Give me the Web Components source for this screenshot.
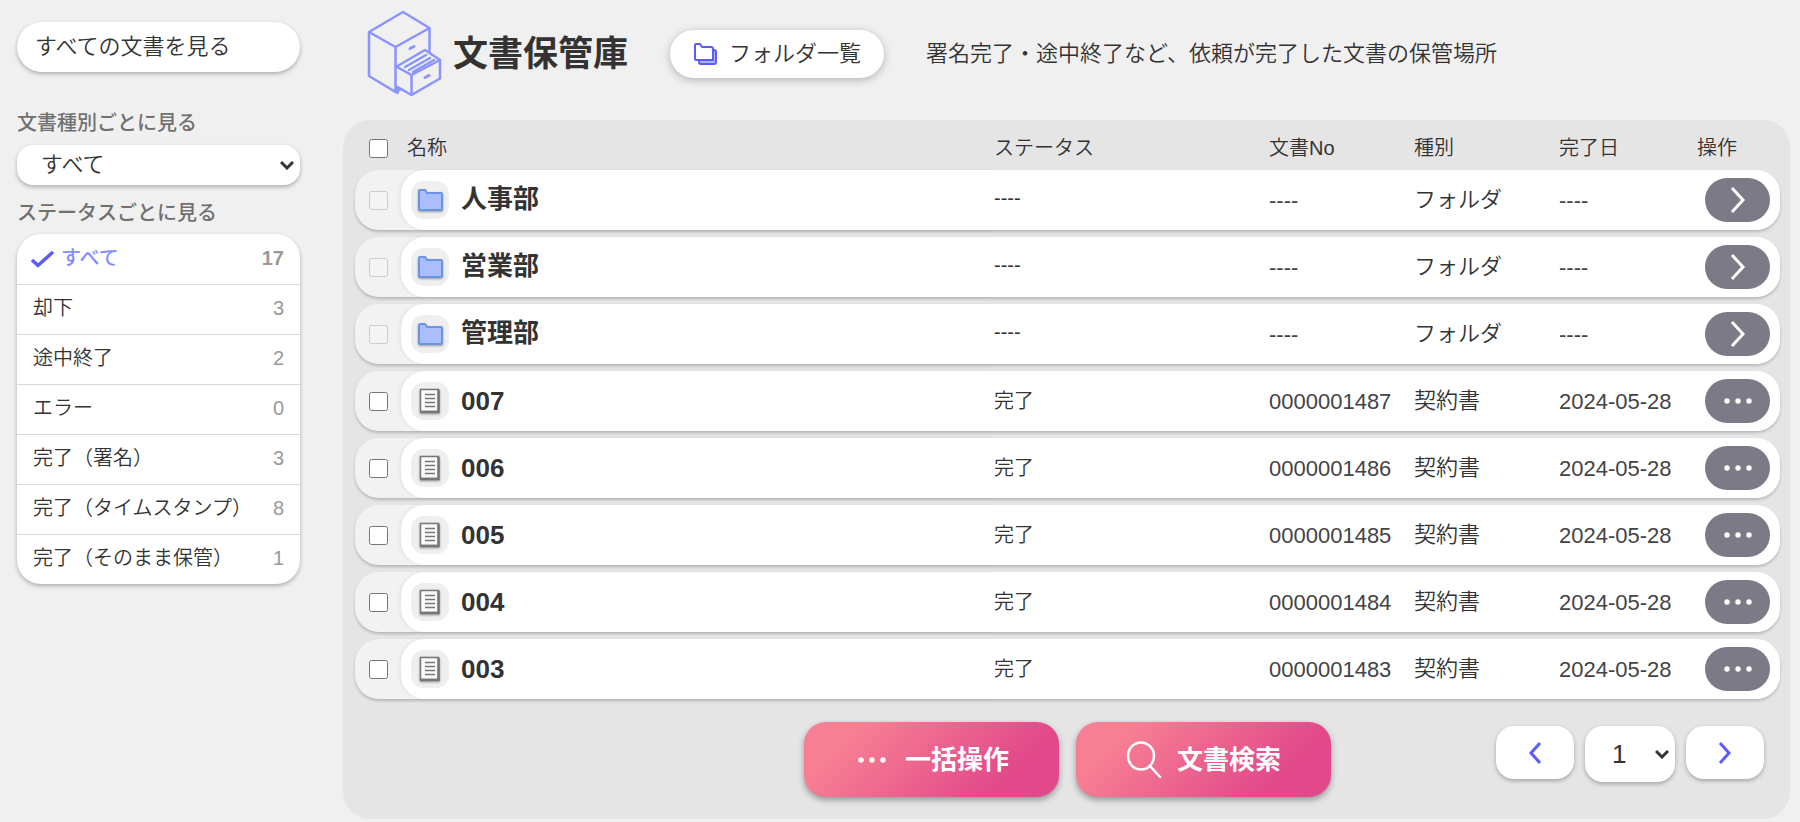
<!DOCTYPE html>
<html lang="ja">
<head>
<meta charset="utf-8">
<meta name="viewport" content="width=device-width, initial-scale=1">
<title>文書保管庫</title>
<style>
    body {
        margin: 0;
        background-color: #f0f0f0;
        color: #333;
        font-family: "Liberation Sans", "Noto Sans CJK JP", sans-serif;
        font-size: 20px;
        font-weight: 350;
    }
</style>
</head>
<body>
<archive-app>
    <side-menu slot="side"></side-menu>
    <archive-header slot="main">文書保管庫</archive-header>
    <archive-panel slot="main">
        <archive-table></archive-table>
        <action-button slot="actions" icon="dots">一括操作</action-button>
        <action-button slot="actions" icon="search">文書検索</action-button>
        <page-nav slot="pager"></page-nav>
    </archive-panel>
</archive-app>

<script>
const BASE = `
    :host, * {
        box-sizing: border-box;
    }

    button, select {
        margin: 0;
        padding: 0;
        border: 0;
        color: inherit;
        font: inherit;
        cursor: pointer;
    }

    svg {
        display: block;
        flex: none;
    }

    .select {
        display: grid;
        align-items: center;
    }

    .select > * {
        grid-area: 1 / 1;
    }

    .select select {
        appearance: none;
        width: 100%;
        background-color: white;
        box-shadow: 0 2px 4px rgba(0, 0, 0, .28);
    }

    .select svg {
        justify-self: end;
        margin-right: 6px;
        pointer-events: none;
    }
`;

const CHEVRON_DOWN = `
    <svg width="14" height="10" viewBox="0 0 14 10" fill="none" stroke="#333" stroke-width="3">
        <path d="M1 2l6 6 6-6"></path>
    </svg>
`;

class ArchiveApp extends HTMLElement {
    constructor() {
        super();
        this.attachShadow({mode: 'open'}).innerHTML = `
            <style>
                ${BASE}
                :host {
                    display: grid;
                    grid-template-columns: 283px minmax(0, 1fr);
                    column-gap: 43px;
                    padding: 0 10px 3px 17px;
                }
            </style>
            <aside><slot name="side"></slot></aside>
            <main><slot name="main"></slot></main>
        `;
    }
}

class SideMenu extends HTMLElement {
    constructor() {
        super();
        const items = [
            ['却下', 3],
            ['途中終了', 2],
            ['エラー', 0],
            ['完了（署名）', 3],
            ['完了（タイムスタンプ）', 8],
            ['完了（そのまま保管）', 1],
        ];
        this.attachShadow({mode: 'open'}).innerHTML = `
            <style>
                ${BASE}
                :host {
                    display: flex;
                    flex-direction: column;
                    padding-top: 22px;
                }

                .all {
                    height: 50px;
                    padding: 0 18px 6px;
                    border-radius: 25px;
                    background-color: white;
                    box-shadow: 0 2px 4px rgba(0, 0, 0, .28);
                    font-size: 22px;
                    text-align: left;
                }

                .caption {
                    margin: 0;
                    color: #707070;
                    font-size: 20px;
                    font-weight: 500;
                    line-height: 26px;
                }

                label.caption {
                    margin-top: 38px;
                }

                .select {
                    margin: 9px 0 15px;
                }

                select {
                    height: 40px;
                    padding: 0 24px 2px;
                    border-radius: 16px;
                    font-size: 22px;
                }

                ul {
                    margin: 8px 0 0;
                    padding: 0;
                    list-style: none;
                    border-radius: 24px;
                    background-color: white;
                    box-shadow: 0 2px 4px rgba(0, 0, 0, .28);
                }

                li:not(:first-child) {
                    border-top: 1px solid #d8d8d8;
                }

                a {
                    display: flex;
                    align-items: center;
                    gap: 6px;
                    height: 49px;
                    padding: 0 16px;
                    color: inherit;
                    text-decoration: none;
                }

                li:first-child a {
                    height: 50px;
                    padding-left: 14px;
                    color: #868dff;
                    font-weight: 500;
                }

                .name {
                    padding-bottom: 6px;
                }

                .count {
                    margin-left: auto;
                    padding-bottom: 2px;
                    color: #999;
                }

                li:first-child .count {
                    font-weight: bold;
                }
            </style>
            <button class="all" type="button">すべての文書を見る</button>
            <label class="caption" for="kind">文書種別ごとに見る</label>
            <span class="select">
                <select id="kind"><option>すべて</option></select>
                ${CHEVRON_DOWN}
            </span>
            <h2 class="caption">ステータスごとに見る</h2>
            <ul>
                <li><a href="#">
                    <svg width="24" height="18" viewBox="0 0 24 18" fill="none" stroke="#5b5bff" stroke-width="3.500">
                        <path d="M1 10l6 5.500L22 2"></path>
                    </svg>
                    <span class="name">すべて</span><span class="count">17</span>
                </a></li>
                ${items.map(([name, count]) => `
                    <li><a href="#"><span class="name">${name}</span><span class="count">${count}</span></a></li>
                `).join('')}
            </ul>
        `;
    }
}

class ArchiveHeader extends HTMLElement {
    constructor() {
        super();
        this.attachShadow({mode: 'open'}).innerHTML = `
            <style>
                ${BASE}
                :host {
                    display: flex;
                    align-items: center;
                    min-height: 120px;
                    padding: 0 24px 12px;
                }

                h1 {
                    margin: 0 42px 0 10px;
                    font-size: 35px;
                    font-weight: bold;
                    line-height: 40px;
                }

                button {
                    display: flex;
                    align-items: center;
                    gap: 11px;
                    height: 48px;
                    padding: 0 23px;
                    border-radius: 24px;
                    background-color: white;
                    box-shadow: 0 2px 8px rgba(0, 0, 0, .25);
                    font-size: 22px;
                    white-space: nowrap;
                }

                button span {
                    padding-bottom: 6px;
                }

                p {
                    margin: 0 0 0 42px;
                    padding-bottom: 6px;
                    font-size: 22px;
                }
            </style>
            <svg width="76" height="88" viewBox="0 0 76 88" fill="none" stroke="#8a94ff" stroke-width="2.500" stroke-linejoin="round" stroke-linecap="round">
                <path d="M36 2L2 22v44l26.500 16V37L2 22M28.500 37l34-19L36 2M62.500 18v24"></path>
                <path d="M30.500 56L58 40l15 10-28.500 15L30 57M44.500 65v20L73 68.500V50M44.500 85L30.500 77v6"></path>
                <path d="M38 57l21-12M42 60l21-12M46 62l21-12M28.500 82l6-3"></path>
                <path stroke-width="3" d="M43 38.500l4-2M58 67.500l4-2"></path>
            </svg>
            <h1><slot></slot></h1>
            <button type="button">
                <svg width="25" height="24" viewBox="0 0 25 24" fill="none" stroke="#5b5bff" stroke-width="2" stroke-linejoin="round">
                    <path fill="#a9b4ff" d="M6 18v2q0 2 2 2h13q2 0 2-2V10q0-2-2-2h-1v10z"></path>
                    <path fill="white" d="M2 17V3q0-1 1-1h4l2 3h9q2 0 2 2v11H3q-1 0-1-1z"></path>
                </svg>
                <span>フォルダ一覧</span>
            </button>
            <p>署名完了・途中終了など、依頼が完了した文書の保管場所</p>
        `;
    }
}

class ArchivePanel extends HTMLElement {
    constructor() {
        super();
        this.attachShadow({mode: 'open'}).innerHTML = `
            <style>
                ${BASE}
                :host {
                    display: block;
                    padding: 0 10px 22px 12px;
                    border-radius: 27px;
                    background-color: #e5e5e5;
                }

                .foot {
                    display: grid;
                    grid-template-columns: 1fr auto 1fr;
                    padding-top: 23px;
                }

                .actions {
                    display: flex;
                    gap: 17px;
                    grid-column: 2;
                }

                .pager {
                    justify-self: end;
                    padding: 4px 16px 0 0;
                }
            </style>
            <slot></slot>
            <div class="foot">
                <div class="actions"><slot name="actions"></slot></div>
                <div class="pager"><slot name="pager"></slot></div>
            </div>
        `;
    }
}

class RowIcon extends HTMLElement {
    connectedCallback() {
        const folder = `
            <svg width="25" height="22" viewBox="0 0 25 22" fill="#a9bdff" stroke="#6b95e2" stroke-width="2" stroke-linejoin="round">
                <path d="M1 20V2q0-1 1-1h5l2 3h14q1 0 1 1v15q0 1-1 1H2q-1 0-1-1z"></path>
            </svg>
        `;
        const paper = `
            <svg width="22" height="26" viewBox="0 0 22 26" fill="none" stroke="#777">
                <path fill="#fafafa" stroke-width="1.500" d="M1.500 1.500h18v22h-18z"></path>
                <path stroke-width="2.500" d="M1 24h18.500V2"></path>
                <path stroke-width="1.500" d="M6 6.500h10M6 10.500h10M6 14.500h10M6 18.500h10"></path>
            </svg>
        `;
        this.attachShadow({mode: 'open'}).innerHTML = `
            <style>
                ${BASE}
                :host {
                    display: flex;
                    align-items: center;
                    justify-content: center;
                    flex: none;
                    width: 38px;
                    height: 38px;
                    border-radius: 13px;
                    background-color: #efefef;
                }

                svg {
                    filter: drop-shadow(0 1px 1px rgba(0, 0, 0, .35));
                }
            </style>
            ${this.getAttribute('type') === 'folder' ? folder : paper}
        `;
    }
}

class ArchiveTable extends HTMLElement {
    constructor() {
        super();
        this.attachShadow({mode: 'open'});
        this.rows = [
            ...['人事部', '営業部', '管理部'].map(name => ({
                name, folder: true, status: '----', no: '----', kind: 'フォルダ', date: '----',
            })),
            ...[7, 6, 5, 4, 3].map(n => ({
                name: `00${n}`, status: '完了', no: `000000148${n}`, kind: '契約書', date: '2024-05-28',
            })),
        ];
    }

    connectedCallback() {
        this.render();
    }

    row(item) {
        const open = '<svg width="20" height="28" viewBox="0 0 20 28" fill="none" stroke="white" stroke-width="3"><path d="M4 2l11 12L4 26"></path></svg>';
        const more = '<svg width="30" height="8" viewBox="0 0 30 8" fill="white"><circle cx="4" cy="4" r="2.700"></circle><circle cx="15" cy="4" r="2.700"></circle><circle cx="26" cy="4" r="2.700"></circle></svg>';
        return `
            <tr class="${item.folder ? 'folder' : ''}">
                <td class="check"><input type="checkbox" aria-label="${item.name}を選択" ${item.folder ? 'disabled' : ''}></td>
                <td class="name"><row-icon type="${item.folder ? 'folder' : 'paper'}"></row-icon><span>${item.name}</span></td>
                <td class="status">${item.status}</td>
                <td class="number">${item.no}</td>
                <td class="kind">${item.kind}</td>
                <td class="number">${item.date}</td>
                <td class="op"><button type="button" aria-label="${item.folder ? '開く' : '操作'}">${item.folder ? open : more}</button></td>
            </tr>
        `;
    }

    render() {
        this.shadowRoot.innerHTML = `
            <style>
                ${BASE}
                :host, table {
                    display: block;
                }

                tbody {
                    display: grid;
                    gap: 7px;
                }

                thead {
                    display: block;
                }

                tr {
                    display: grid;
                    grid-template-columns: 46px minmax(0, 1fr) 275px 145px 145px 138px 83px;
                }

                thead tr {
                    height: 50px;
                    padding-top: 2px;
                }

                th, td {
                    display: flex;
                    align-items: center;
                    padding: 0;
                    white-space: nowrap;
                }

                th {
                    font-weight: inherit;
                }

                th.check {
                    padding-top: 4px;
                }

                th.name {
                    padding-left: 6px;
                }

                tbody tr {
                    height: 60px;
                    border-radius: 24px;
                    background-color: #f2f2f2;
                    box-shadow: 0 2px 3px rgba(0, 0, 0, .2);
                }

                td {
                    background-color: white;
                    font-size: 22px;
                }

                td.check {
                    background-color: transparent;
                }

                td.name {
                    gap: 12px;
                    padding-left: 10px;
                    border-radius: 24px 0 0 24px;
                    box-shadow: -2px 0 3px rgba(0, 0, 0, .05);
                    font-size: 26px;
                    font-weight: bold;
                }

                .folder .name span {
                    padding-bottom: 8px;
                }

                td.status {
                    padding-bottom: 4px;
                    font-size: 20px;
                }

                td.kind {
                    padding-bottom: 6px;
                }

                td.number {
                    padding-top: 2px;
                    color: #444;
                }

                td.op {
                    justify-content: center;
                    padding-right: 2px;
                    border-radius: 0 24px 24px 0;
                }

                input {
                    width: 19px;
                    height: 19px;
                    margin: 0 0 0 14px;
                }

                button {
                    display: flex;
                    align-items: center;
                    justify-content: center;
                    width: 65px;
                    height: 44px;
                    border-radius: 22px;
                    background-color: #7b7a86;
                }
            </style>
            <table>
                <thead>
                    <tr>
                        <th class="check"><input type="checkbox" aria-label="すべて選択"></th>
                        <th class="name">名称</th>
                        <th>ステータス</th>
                        <th>文書No</th>
                        <th>種別</th>
                        <th>完了日</th>
                        <th>操作</th>
                    </tr>
                </thead>
                <tbody>${this.rows.map(item => this.row(item)).join('')}</tbody>
            </table>
        `;
    }
}

class ActionButton extends HTMLElement {
    connectedCallback() {
        const icons = {
            dots: '<svg width="36" height="36" viewBox="0 0 36 36" fill="white"><circle cx="7" cy="18" r="2.700"></circle><circle cx="18" cy="18" r="2.700"></circle><circle cx="29" cy="18" r="2.700"></circle></svg>',
            search: '<svg width="36" height="38" viewBox="0 0 36 38" fill="none" stroke="white" stroke-width="2.500" stroke-linecap="round"><ellipse cx="15" cy="15" rx="13" ry="13.500"></ellipse><path d="M24 25l10 11"></path></svg>',
        };
        this.attachShadow({mode: 'open'}).innerHTML = `
            <style>
                ${BASE}
                :host {
                    display: block;
                }

                button {
                    display: flex;
                    align-items: center;
                    justify-content: center;
                    gap: 15px;
                    width: 255px;
                    height: 75px;
                    border-radius: 22px;
                    background-image: linear-gradient(135deg, #f77f93 18%, #e2498a 78%);
                    box-shadow: 0 3px 6px rgba(0, 0, 0, .35);
                    color: white;
                    font-size: 26px;
                    font-weight: bold;
                }

                span {
                    padding-bottom: 4px;
                }
            </style>
            <button type="button">${icons[this.getAttribute('icon')]}<span><slot></slot></span></button>
        `;
    }
}

class PageNav extends HTMLElement {
    constructor() {
        super();
        this.attachShadow({mode: 'open'}).innerHTML = `
            <style>
                ${BASE}
                :host {
                    display: flex;
                    align-items: flex-start;
                    gap: 11px;
                }

                button {
                    display: flex;
                    align-items: center;
                    justify-content: center;
                    width: 78px;
                    height: 53px;
                    border-radius: 18px;
                    background-color: white;
                    box-shadow: 0 2px 4px rgba(0, 0, 0, .28);
                }

                .select {
                    width: 90px;
                }

                select {
                    height: 56px;
                    padding: 0 27px;
                    border-radius: 18px;
                    font-size: 26px;
                }
            </style>
            <button type="button" aria-label="前のページ">
                <svg width="14" height="24" viewBox="0 0 14 24" fill="none" stroke="#5b5bff" stroke-width="3"><path d="M12 2L3 12l9 10"></path></svg>
            </button>
            <span class="select">
                <select aria-label="ページ"><option>1</option></select>
                ${CHEVRON_DOWN}
            </span>
            <button type="button" aria-label="次のページ">
                <svg width="14" height="24" viewBox="0 0 14 24" fill="none" stroke="#5b5bff" stroke-width="3"><path d="M2 2l9 10-9 10"></path></svg>
            </button>
        `;
    }
}

customElements.define('archive-app', ArchiveApp);
customElements.define('side-menu', SideMenu);
customElements.define('archive-header', ArchiveHeader);
customElements.define('archive-panel', ArchivePanel);
customElements.define('row-icon', RowIcon);
customElements.define('archive-table', ArchiveTable);
customElements.define('action-button', ActionButton);
customElements.define('page-nav', PageNav);
</script>
</body>
</html>
